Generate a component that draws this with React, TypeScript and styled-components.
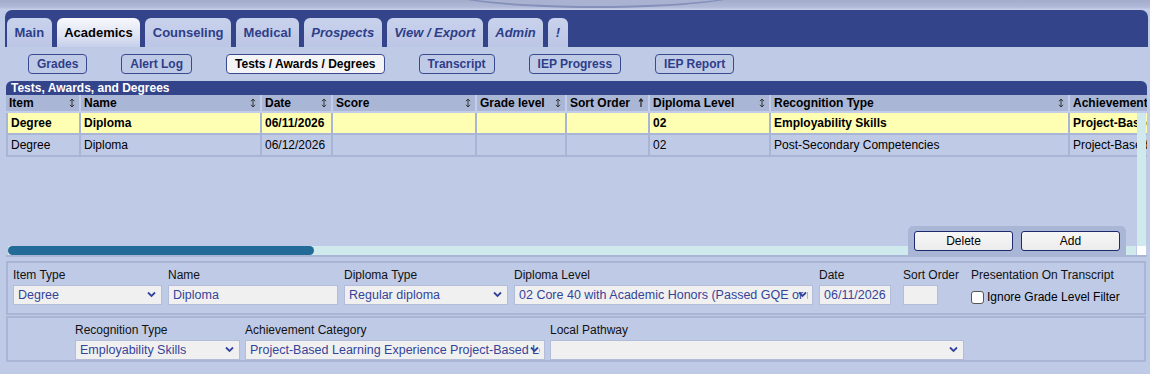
import React from 'react';
import styled, { createGlobalStyle } from 'styled-components';

const GlobalStyle = createGlobalStyle`
body {
    margin: 0;
    background: #bfcae7;
    font-family: "Liberation Sans", Arial, sans-serif;
    color: #000;
}
`

const TopStrip = styled.div`
position: relative;
height: 10px;
background: linear-gradient(#a3acca, #b0b9d7 70%, #c9d1ec);
overflow: hidden;
`

const Swoosh = styled.div`
position: absolute;
left: 445px;
top: -26px;
width: 300px;
height: 32px;
border-radius: 50%;
border-bottom: 2px solid #8490ba;
border-left: 2px solid #8c97bf;
background: #a9b2d0;
`

const TabBand = styled.div`
margin: 0 2px 0 5px;
background: #34448a;
border-radius: 7px 7px 0 0;
padding: 8px 0 0 2px;
display: flex;
gap: 5px;
`

const Tab = styled.div<{ $active?: boolean; $italic?: boolean }>`
height: 29px;
padding: 0 7.5px;
display: flex;
align-items: center;
border-radius: 6px 6px 0 0;
font-size: 13px;
font-weight: bold;
font-style: ${p => p.$italic ? 'italic' : 'normal'};
color: ${p => p.$active ? '#000' : '#2e3e88'};
background: ${p => p.$active ? 'linear-gradient(#f7f8fc, #dfe4f3 60%, #c6cfea)' : 'linear-gradient(#c9d2ec, #bcc6e5)'};
`

const SubNav = styled.div`
display: flex;
gap: 34px;
padding: 7px 0 0 28px;
height: 20px;
`

const SubButton = styled.div<{ $active?: boolean }>`
height: 18px;
padding: 0 8px;
display: flex;
align-items: center;
border: 1px solid #3a4a8e;
border-radius: 4px;
font-size: 12px;
font-weight: bold;
color: ${p => p.$active ? '#000' : '#2e3e88'};
background: ${p => p.$active ? '#f4f4f6' : '#bfcae7'};
`

const Section = styled.div`
margin: 7px 3px 0 6px;
`

const SectionTitle = styled.div`
height: 14px;
background: #34448a;
border-radius: 6px 6px 0 0;
color: #fff;
font-size: 12px;
font-weight: bold;
line-height: 14px;
padding-left: 5px;
`

const GridFrame = styled.div`
position: relative;
height: 160px;
display: flex;
flex-direction: column;
border-bottom: 2px solid #a9b5d5;
`

const Viewport = styled.div`
flex: 1;
overflow: hidden;
`

const Table = styled.table`
border-collapse: separate;
border-spacing: 0;
table-layout: fixed;
width: 1345px;
font-size: 12px;
`

const Th = styled.th`
height: 16px;
padding: 0 0 0 3px;
background: #aab6d5;
border-right: 2px solid #c3cde9;
border-bottom: 2px solid #c3cde9;
text-align: left;
font-weight: bold;
white-space: nowrap;
overflow: hidden;
`

const ThInner = styled.div`
display: flex;
justify-content: space-between;
align-items: center;
padding-right: 4px;
`

const Tr = styled.tr<{ $selected?: boolean }>`
background: ${p => p.$selected ? '#ffffb4' : 'transparent'};
font-weight: ${p => p.$selected ? 'bold' : 'normal'};
`

const Td = styled.td`
height: 20px;
padding: 0 0 0 3px;
border-right: 2px solid #a9b5d5;
border-bottom: 2px solid #a9b5d5;
white-space: nowrap;
overflow: hidden;
&:first-child {
    border-left: 2px solid #a9b5d5;
}
`

const HScrollRow = styled.div`
height: 9px;
display: flex;
padding-left: 2px;
`

const HTrack = styled.div`
flex: 1;
background: #cfe9ed;
`

const Thumb = styled.div`
width: 306px;
height: 9px;
border-radius: 5px;
background: #226a98;
`

const Corner = styled.div`
width: 9px;
height: 9px;
margin: 0 1px;
background: #fff;
`

const VScroll = styled.div`
position: absolute;
right: 1px;
top: 18px;
bottom: 9px;
width: 9px;
background: #cfe9ed;
`

const ActionPanel = styled.div`
position: absolute;
right: 21px;
bottom: 0;
box-sizing: border-box;
width: 218px;
height: 29px;
padding: 5px 6px 0;
display: flex;
gap: 8px;
background: #aab6d5;
border-radius: 5px 5px 0 0;
`

const ActionButton = styled.button`
width: 99px;
height: 20px;
padding: 0;
border: 1px solid #1e2a6e;
border-radius: 3px;
background: linear-gradient(#f6f6f6, #ececec);
font-family: "Liberation Sans", Arial, sans-serif;
font-size: 12px;
color: #000;
`

const FormPanel = styled.div<{ $indent: number; $top: number; $gap: number; $bottom: number }>`
margin: ${p => p.$top}px 4px 0 6px;
border: 2px solid #a9b5d5;
padding: 5px 0 ${p => p.$bottom}px ${p => p.$indent}px;
display: flex;
gap: ${p => p.$gap}px;
`

const Field = styled.div<{ $w: number }>`
width: ${p => p.$w}px;
display: flex;
flex-direction: column;
`

const Label = styled.label`
font-size: 12px;
line-height: 14px;
color: #111;
white-space: nowrap;
margin-bottom: 3px;
`

const InputBox = styled.div`
position: relative;
height: 20px;
`

const TextInput = styled.input<{ $w?: number }>`
box-sizing: border-box;
width: ${p => p.$w ? `${p.$w}px` : '100%'};
height: 20px;
border: 1px solid #b3bdd9;
background: #f0f0f0;
padding: 0 4px;
font-family: "Liberation Sans", Arial, sans-serif;
font-size: 12.5px;
color: #34449a;
outline: none;
`

const Select = styled.select`
box-sizing: border-box;
width: 100%;
height: 20px;
border: 1px solid #b3bdd9;
border-radius: 0;
background: #f0f0f0;
padding: 0 4px;
appearance: none;
font-family: "Liberation Sans", Arial, sans-serif;
font-size: 12.5px;
color: #34449a;
outline: none;
`

const Chevron = styled.svg`
position: absolute;
right: 6px;
top: 6px;
pointer-events: none;
`

const CheckRow = styled.div`
display: flex;
align-items: center;
gap: 3px;
font-size: 12px;
height: 20px;
padding-top: 2px;
`

const Check = styled.input`
appearance: none;
margin: 0;
width: 13px;
height: 13px;
border: 1px solid #555;
border-radius: 3px;
background: #fff;
`

const SortIcon = ({ up }: { up?: boolean }) => (
    <svg width="6" height="10" viewBox="0 0 6 10">
        {up ? (
            <path d="M3 1 V9 M1 3.5 L3 1 L5 3.5" stroke="#222" strokeWidth="1.2" fill="none" />
        ) : (
            <path d="M3 1.5 V8.5 M1 3.2 L3 1 L5 3.2 M1 6.8 L3 9 L5 6.8" stroke="#333" strokeWidth="1" fill="none" />
        )}
    </svg>
)

const Dropdown = ({ value }: { value: string }) => (
    <InputBox>
        <Select defaultValue={value}>
            <option>{value}</option>
        </Select>
        <Chevron width="9" height="7" viewBox="0 0 9 7">
            <path d="M1 1.5 L4.5 5 L8 1.5" stroke="#34449a" strokeWidth="1.8" fill="none" />
        </Chevron>
    </InputBox>
)

const columns: { title: string; width: number; up?: boolean }[] = [
    { title: 'Item', width: 75 },
    { title: 'Name', width: 181 },
    { title: 'Date', width: 71 },
    { title: 'Score', width: 144 },
    { title: 'Grade level', width: 90 },
    { title: 'Sort Order', width: 83, up: true },
    { title: 'Diploma Level', width: 121 },
    { title: 'Recognition Type', width: 299 },
    { title: 'Achievement Category', width: 281 },
]

const rows = [
    ['Degree', 'Diploma', '06/11/2026', '', '', '', '02', 'Employability Skills', 'Project-Based Learning Experience'],
    ['Degree', 'Diploma', '06/12/2026', '', '', '', '02', 'Post-Secondary Competencies', 'Project-Based Learning Experience'],
]

const tabs = [
    { label: 'Main' },
    { label: 'Academics', active: true },
    { label: 'Counseling' },
    { label: 'Medical' },
    { label: 'Prospects', italic: true },
    { label: 'View / Export', italic: true },
    { label: 'Admin', italic: true },
    { label: '!', italic: true },
]

const subTabs = ['Grades', 'Alert Log', 'Tests / Awards / Degrees', 'Transcript', 'IEP Progress', 'IEP Report']

const App = () => {
    return (
        <>
            <GlobalStyle />
            <TopStrip>
                <Swoosh />
            </TopStrip>
            <TabBand>
                {tabs.map(t => (
                    <Tab key={t.label} $active={t.active} $italic={t.italic}>{t.label}</Tab>
                ))}
            </TabBand>
            <SubNav>
                {subTabs.map(s => (
                    <SubButton key={s} $active={s === 'Tests / Awards / Degrees'}>{s}</SubButton>
                ))}
            </SubNav>

            <Section>
                <SectionTitle>Tests, Awards, and Degrees</SectionTitle>
                <GridFrame>
                    <Viewport>
                        <Table>
                            <colgroup>
                                {columns.map(c => <col key={c.title} style={{ width: c.width }} />)}
                            </colgroup>
                            <thead>
                                <tr>
                                    {columns.map(c => (
                                        <Th key={c.title}>
                                            <ThInner>
                                                <span>{c.title}</span>
                                                <SortIcon up={c.up} />
                                            </ThInner>
                                        </Th>
                                    ))}
                                </tr>
                            </thead>
                            <tbody>
                                {rows.map((r, i) => (
                                    <Tr key={i} $selected={i === 0}>
                                        {r.map((cell, j) => <Td key={j}>{cell}</Td>)}
                                    </Tr>
                                ))}
                            </tbody>
                        </Table>
                    </Viewport>
                    <HScrollRow>
                        <HTrack>
                            <Thumb />
                        </HTrack>
                        <Corner />
                    </HScrollRow>
                    <VScroll />
                    <ActionPanel>
                        <ActionButton>Delete</ActionButton>
                        <ActionButton>Add</ActionButton>
                    </ActionPanel>
                </GridFrame>
            </Section>

            <FormPanel $indent={5} $top={4} $gap={6} $bottom={6}>
                <Field $w={149}>
                    <Label>Item Type</Label>
                    <Dropdown value="Degree" />
                </Field>
                <Field $w={170}>
                    <Label>Name</Label>
                    <TextInput defaultValue="Diploma" />
                </Field>
                <Field $w={164}>
                    <Label>Diploma Type</Label>
                    <Dropdown value="Regular diploma" />
                </Field>
                <Field $w={299}>
                    <Label>Diploma Level</Label>
                    <Dropdown value="02 Core 40 with Academic Honors (Passed GQE or met" />
                </Field>
                <Field $w={78}>
                    <Label>Date</Label>
                    <TextInput defaultValue="06/11/2026" $w={72} />
                </Field>
                <Field $w={62}>
                    <Label>Sort Order</Label>
                    <TextInput defaultValue="" $w={35} />
                </Field>
                <Field $w={160}>
                    <Label>Presentation On Transcript</Label>
                    <CheckRow>
                        <Check type="checkbox" />
                        <span>Ignore Grade Level Filter</span>
                    </CheckRow>
                </Field>
            </FormPanel>

            <FormPanel $indent={67} $top={1} $gap={5} $bottom={0}>
                <Field $w={165}>
                    <Label>Recognition Type</Label>
                    <Dropdown value="Employability Skills" />
                </Field>
                <Field $w={300}>
                    <Label>Achievement Category</Label>
                    <Dropdown value="Project-Based Learning Experience Project-Based Learning" />
                </Field>
                <Field $w={414}>
                    <Label>Local Pathway</Label>
                    <Dropdown value="" />
                </Field>
            </FormPanel>
        </>
    )
}

export default App
